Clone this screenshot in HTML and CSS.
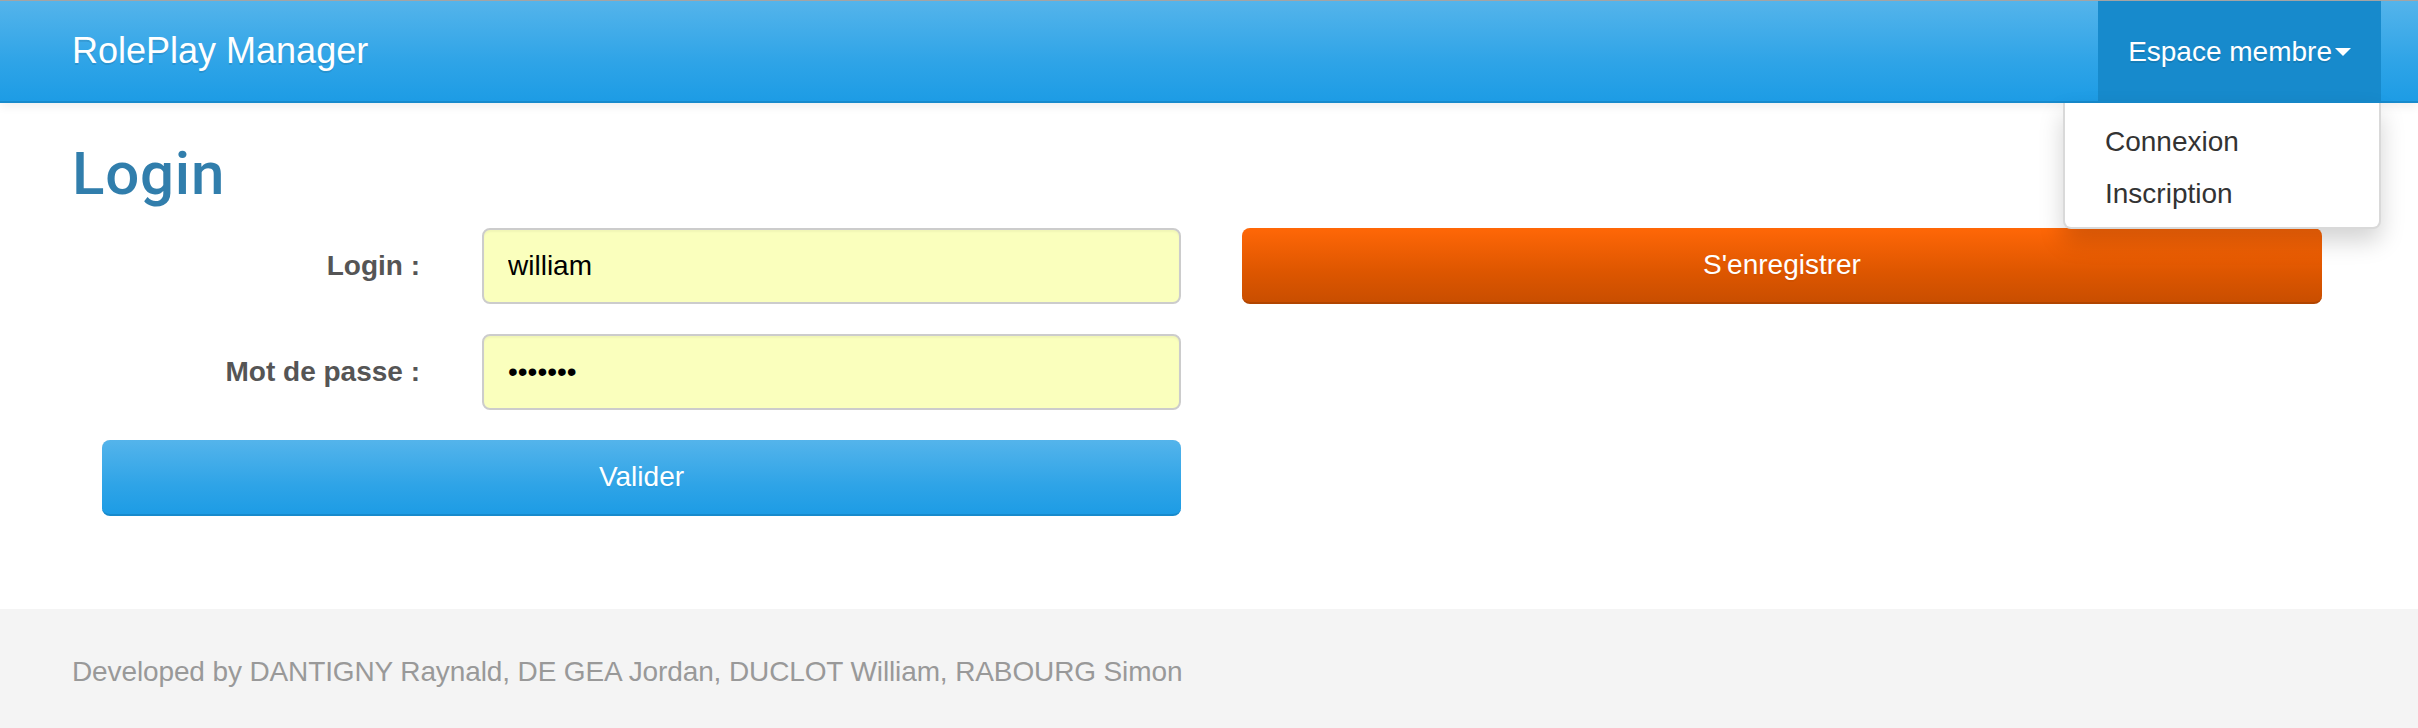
FILE: index.html
```html
<!DOCTYPE html>
<html lang="fr">
<head>
<meta charset="utf-8">
<title>RolePlay Manager - Login</title>
<link rel="stylesheet" href="styles.css">
</head>
<body>
<header class="navbar">
  <div class="navbar-inner">
    <a class="brand" href="#">RolePlay Manager</a>
    <ul class="nav">
      <li class="dropdown">
        <a class="dropdown-toggle" href="#">Espace membre<span class="caret"></span></a>
        <ul class="dropdown-menu">
          <li><a href="#">Connexion</a></li>
          <li><a href="#">Inscription</a></li>
        </ul>
      </li>
    </ul>
  </div>
</header>

<main class="content">
  <h2 class="page-title">Login</h2>
  <div class="form-area">
    <form class="login-form">
      <div class="form-row">
        <label class="form-label" for="login">Login :</label>
        <input class="form-input" id="login" type="text" value="william">
      </div>
      <div class="form-row">
        <label class="form-label" for="pass">Mot de passe :</label>
        <input class="form-input" id="pass" type="password" value="1234567">
      </div>
      <div class="submit-row">
        <button class="btn btn-primary" type="button">Valider</button>
      </div>
    </form>
    <div class="register-col">
      <button class="btn btn-warning" type="button">S'enregistrer</button>
    </div>
  </div>
</main>

<footer class="footer">
  <p class="footer-text">Developed by DANTIGNY Raynald, DE GEA Jordan, DUCLOT William, RABOURG Simon</p>
</footer>
</body>
</html>
```

FILE: styles.css
```css
* { box-sizing: border-box; }

html, body {
  margin: 0;
  padding: 0;
}

body {
  font-family: "Liberation Sans", Arial, Helvetica, sans-serif;
  font-size: 28px;
  line-height: 40px;
  color: #555555;
  background: #ffffff;
  min-height: 728px;
  display: flex;
  flex-direction: column;
}

a { text-decoration: none; }

/* Navbar */
.navbar {
  position: relative;
  z-index: 10;
  border-top: 1px solid #a4a4a4;
  border-bottom: 2px solid #178acc;
  background-image: linear-gradient(#54b4eb, #2fa4e7 60%, #1d9ce5);
  box-shadow: 0 3px 10px rgba(0, 0, 0, 0.07);
}

.navbar-inner {
  display: flex;
  justify-content: space-between;
  align-items: stretch;
  height: 100px;
  padding: 0 37px 0 72px;
}

.brand {
  color: #ffffff;
  font-size: 36px;
  line-height: 40px;
  padding-top: 30px;
  text-shadow: 0 2px 0 rgba(0, 0, 0, 0.1);
}

.nav {
  list-style: none;
  margin: 0;
  padding: 0;
  display: flex;
}

.dropdown {
  position: relative;
  background: #178acc;
}

.dropdown-toggle {
  display: block;
  color: #ffffff;
  padding: 31px 30px 29px 30px;
  line-height: 40px;
  text-shadow: 0 2px 0 rgba(0, 0, 0, 0.1);
}

.caret {
  display: inline-block;
  width: 0;
  height: 0;
  margin-left: 3px;
  vertical-align: middle;
  border-top: 8px solid #ffffff;
  border-left: 8px solid transparent;
  border-right: 8px solid transparent;
  position: relative;
  top: -2px;
}

.dropdown-menu {
  position: absolute;
  top: calc(100% + 2px);
  right: 0;
  min-width: 318px;
  list-style: none;
  margin: 0;
  padding: 13px 0 7px 0;
  background: #ffffff;
  border: 2px solid rgba(0, 0, 0, 0.15);
  border-top: 0;
  border-radius: 0 0 8px 8px;
  box-shadow: 0 12px 24px rgba(0, 0, 0, 0.175);
}

.dropdown-menu a {
  display: block;
  padding: 6px 40px;
  color: #333333;
  line-height: 40px;
  white-space: nowrap;
}

/* Content */
.content {
  padding: 0 72px 93px 72px;
}

.page-title {
  margin: 38px 0 21px 0;
  font-family: Roboto, "Liberation Sans", Arial, sans-serif;
  font-weight: 500;
  font-size: 60px;
  line-height: 66px;
  letter-spacing: 0.8px;
  color: #317eac;
}

.form-area {
  display: flex;
  align-items: flex-start;
  gap: 61px;
}

.login-form {
  width: 1109px;
  margin: 0;
}

.form-row {
  display: grid;
  grid-template-columns: 348px 699px;
  column-gap: 62px;
  align-items: center;
  margin-bottom: 30px;
}

.form-label {
  text-align: right;
  font-weight: bold;
  color: #555555;
}

.form-input {
  height: 76px;
  width: 100%;
  padding: 16px 24px;
  font-family: "Liberation Sans", Arial, sans-serif;
  font-size: 28px;
  line-height: 40px;
  color: #000000;
  background: #faffbd;
  border: 2px solid #cccccc;
  border-radius: 8px;
  box-shadow: inset 0 2px 2px rgba(0, 0, 0, 0.04);
  outline: none;
}

.submit-row {
  padding-left: 30px;
}

.btn {
  display: block;
  width: 1079px;
  height: 76px;
  padding: 16px 24px;
  font-family: "Liberation Sans", Arial, sans-serif;
  font-size: 28px;
  line-height: 40px;
  color: #ffffff;
  text-align: center;
  border: 0;
  border-radius: 8px;
  text-shadow: 0 2px 0 rgba(0, 0, 0, 0.05);
  cursor: pointer;
}

.btn-primary {
  background-image: linear-gradient(#54b4eb, #2fa4e7 60%, #1d9ce5);
  border-bottom: 2px solid #178acc;
}

.btn-warning {
  width: 1080px;
  background-image: linear-gradient(#ff6707, #dd5600 60%, #c94e00);
  border-bottom: 2px solid #b14500;
}

/* Footer */
.footer {
  flex: 1;
  min-height: 119px;
  background: #f4f4f4;
  padding: 43px 72px 0 72px;
}

.footer-text {
  margin: 0;
  color: #999999;
  font-size: 28px;
  line-height: 40px;
  letter-spacing: -0.12px;
}
```
